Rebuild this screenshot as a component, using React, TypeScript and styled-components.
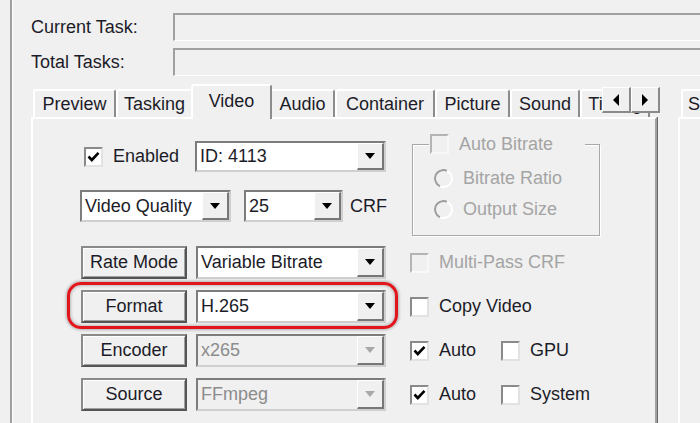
import React from 'react'
import styled, { createGlobalStyle } from 'styled-components'

const GlobalStyle = createGlobalStyle`
  html, body {
    margin: 0;
    padding: 0;
    background: #f0f0f0;
  }
  body {
    font-family: "Liberation Sans", Arial, sans-serif;
    font-size: 18px;
    color: #1c1c28;
  }
`

const Screen = styled.div`
  display: flex;
  width: 700px;
  height: 423px;
  overflow: hidden;
  background: #f0f0f0;
`

const Frame = styled.div`
  display: flex;
  flex-direction: column;
  flex: 1;
  min-width: 0;
  margin-left: 10px;
  padding: 13px 0 0 19px;
  border-left: 2px solid #a0a0a0;
  box-shadow: inset 1px 0 #ffffff;
`

const StatusGrid = styled.div`
  display: grid;
  grid-template-columns: 142px 560px;
  grid-auto-rows: 28px;
  row-gap: 7px;
`

const FieldLabel = styled.div`
  display: flex;
  align-items: center;
  white-space: nowrap;
`

const StatusBox = styled.div`
  box-sizing: border-box;
  border-top: 2px solid #a0a0a0;
  border-left: 2px solid #a0a0a0;
  border-bottom: 1px solid #ffffff;
  background: #f0f0f0;
`

const TabsRow = styled.div`
  display: flex;
  flex: 1;
  min-height: 0;
  margin-top: 8px;
`

const TabControl = styled.div`
  display: flex;
  flex-direction: column;
  width: 626px;
  flex-shrink: 0;
`

const TabStrip = styled.div`
  position: relative;
  display: flex;
  align-items: flex-end;
  height: 33px;
  padding-left: 2px;
`

const Tab = styled.div<{ $w: number; $active?: boolean }>`
  position: relative;
  box-sizing: border-box;
  display: flex;
  align-items: center;
  justify-content: center;
  flex-shrink: 0;
  width: ${(p) => (p.$active ? p.$w + 4 : p.$w)}px;
  height: ${(p) => (p.$active ? 35 : 28)}px;
  margin: ${(p) => (p.$active ? '0 -2px -2px' : '0')};
  padding-bottom: ${(p) => (p.$active ? 3 : 0)}px;
  z-index: ${(p) => (p.$active ? 2 : 1)};
  background: #f0f0f0;
  border-top: 2px solid #ffffff;
  border-left: 2px solid #ffffff;
  border-right: 2px solid #8c8c8c;
  border-radius: 3px 3px 0 0;
  white-space: nowrap;
  overflow: hidden;
`

const ScrollArrows = styled.div`
  position: absolute;
  right: -3px;
  top: 3px;
  display: flex;
  z-index: 3;
`

const ArrowBtn = styled.div`
  box-sizing: border-box;
  display: flex;
  align-items: center;
  justify-content: center;
  width: 29px;
  height: 26px;
  background: #f0f0f0;
  border-top: 1px solid #ffffff;
  border-left: 1px solid #ffffff;
  border-right: 2px solid #8a8a8a;
  border-bottom: 2px solid #8a8a8a;
`

const TriLeft = styled.span`
  width: 0;
  height: 0;
  border-top: 6px solid transparent;
  border-bottom: 6px solid transparent;
  border-right: 6px solid #000;
`

const TriRight = styled.span`
  width: 0;
  height: 0;
  border-top: 6px solid transparent;
  border-bottom: 6px solid transparent;
  border-left: 6px solid #000;
`

const TabPanel = styled.div`
  flex: 1;
  box-sizing: border-box;
  padding: 22px 0 0 47px;
  border-top: 2px solid #ffffff;
  border-left: 2px solid #ffffff;
  border-right: 2px solid #a0a0a0;
  box-shadow: 1px 0 #696969;
  display: flex;
  flex-direction: column;
`

const SidePane = styled.div`
  display: flex;
  flex-direction: column;
  flex: 1;
  margin-left: 21px;
`

const SideTab = styled.div`
  box-sizing: border-box;
  height: 28px;
  width: 60px;
  margin: 5px 0 0 3px;
  padding-left: 5px;
  display: flex;
  align-items: center;
  border-top: 2px solid #ffffff;
  border-left: 2px solid #ffffff;
  border-radius: 3px 3px 0 0;
`

const SidePanel = styled.div`
  flex: 1;
  border-top: 2px solid #ffffff;
  border-left: 2px solid #ffffff;
`

const TopBlock = styled.div`
  display: flex;
  align-items: flex-start;
`

const LeftStack = styled.div`
  display: flex;
  flex-direction: column;
  gap: 18px;
  width: 306px;
`

const StackRow = styled.div<{ $h: number; $spread?: boolean }>`
  display: flex;
  align-items: center;
  height: ${(p) => p.$h}px;
  justify-content: ${(p) => (p.$spread ? 'space-between' : 'flex-start')};
`

const ComboBox = styled.div<{ $w: number; $disabled?: boolean; $ml?: number }>`
  box-sizing: border-box;
  display: flex;
  width: ${(p) => p.$w}px;
  height: 100%;
  margin-left: ${(p) => p.$ml ?? 0}px;
  flex-shrink: 0;
  border: 2px solid;
  border-color: #7c7c7c #cfcfcf #cfcfcf #7c7c7c;
  background: ${(p) => (p.$disabled ? '#f0f0f0' : '#ffffff')};
  color: ${(p) => (p.$disabled ? '#8c8c8c' : 'inherit')};
`

const ComboText = styled.div`
  flex: 1;
  display: flex;
  align-items: center;
  padding-left: 3px;
  white-space: nowrap;
  overflow: hidden;
`

const ComboArrow = styled.div`
  box-sizing: border-box;
  display: flex;
  align-items: center;
  justify-content: center;
  width: 27px;
  background: #f0f0f0;
  border-top: 1px solid #ffffff;
  border-left: 1px solid #ffffff;
  border-right: 2px solid #777777;
  border-bottom: 2px solid #777777;
`

const DownTri = styled.span<{ $disabled?: boolean }>`
  width: 0;
  height: 0;
  border-left: 5px solid transparent;
  border-right: 5px solid transparent;
  border-top: 6px solid ${(p) => (p.$disabled ? '#a8a8a8' : '#000000')};
`

const Suffix = styled.span`
  margin-left: 7px;
`

const GroupBox = styled.div`
  position: relative;
  box-sizing: border-box;
  width: 188px;
  height: 92px;
  margin: 3px 0 0 26px;
  padding: 22px 0 0 21px;
  border: 1px solid #a8a8a8;
  box-shadow: inset 1px 1px #ffffff, 1px 1px #ffffff;
  display: flex;
  flex-direction: column;
  gap: 9px;
`

const Legend = styled.div`
  position: absolute;
  top: -12px;
  left: 16px;
  width: 155px;
  height: 22px;
  padding-left: 1px;
  background: #f0f0f0;
  display: flex;
  align-items: center;
`

const CheckItem = styled.label<{ $disabled?: boolean; $w?: number; $ml?: number }>`
  display: inline-flex;
  align-items: center;
  gap: 10px;
  height: 22px;
  flex-shrink: 0;
  width: ${(p) => (p.$w ? `${p.$w}px` : 'auto')};
  margin-left: ${(p) => p.$ml ?? 0}px;
  color: ${(p) => (p.$disabled ? '#a4a4a4' : 'inherit')};
  white-space: nowrap;
`

const Box = styled.span<{ $disabled?: boolean }>`
  box-sizing: border-box;
  display: inline-flex;
  align-items: center;
  justify-content: center;
  width: 19px;
  height: 20px;
  border: 2px solid;
  border-color: ${(p) =>
    p.$disabled ? '#b4b4b4 #f8f8f8 #f8f8f8 #b4b4b4' : '#8a8a8a #e2e2e2 #e2e2e2 #8a8a8a'};
  background: ${(p) => (p.$disabled ? '#f0f0f0' : '#ffffff')};
`

const RadioDot = styled.span`
  box-sizing: border-box;
  width: 19px;
  height: 19px;
  border-radius: 50%;
  border: 2px solid;
  border-color: #9c9c9c #ffffff #ffffff #9c9c9c;
  transform: rotate(-20deg);
  background: #f0f0f0;
`

const FormRows = styled.div`
  display: flex;
  flex-direction: column;
  gap: 11px;
  margin-top: 10px;
`

const FormRow = styled.div`
  position: relative;
  display: flex;
  align-items: center;
  height: 33px;
`

const PushButton = styled.button`
  box-sizing: border-box;
  width: 106px;
  height: 100%;
  margin-left: 1px;
  padding: 0;
  flex-shrink: 0;
  font: inherit;
  color: inherit;
  background: #f0f0f0;
  border: 2px solid;
  border-color: #8a8a8a #555555 #555555 #8a8a8a;
  box-shadow: inset 1px 1px #ffffff, inset -1px -1px #a0a0a0;
`

const RightCell = styled.div`
  display: flex;
  align-items: center;
  margin-left: 24px;
`

const Highlight = styled.div`
  position: absolute;
  left: -13px;
  top: -8px;
  width: 331px;
  height: 47px;
  box-sizing: border-box;
  border: 3px solid #e2141c;
  border-radius: 14px;
  box-shadow: 0 0 3px 1px rgba(0, 0, 0, 0.28), inset 0 0 3px 1px rgba(0, 0, 0, 0.22);
  pointer-events: none;
`

const TABS = [
  { label: 'Preview', w: 83 },
  { label: 'Tasking', w: 77 },
  { label: 'Video', w: 77, active: true },
  { label: 'Audio', w: 65 },
  { label: 'Container', w: 100 },
  { label: 'Picture', w: 75 },
  { label: 'Sound', w: 70 },
  { label: 'Timing', w: 70 },
]

function Check({ checked, disabled }: { checked?: boolean; disabled?: boolean }) {
  return (
    <Box $disabled={disabled}>
      {checked ? (
        <svg width="13" height="12" viewBox="0 0 13 12">
          <path d="M1.5 5.5 L4.8 9 L11.5 1.8" fill="none" stroke="#000" strokeWidth="2.6" />
        </svg>
      ) : null}
    </Box>
  )
}

function Combo({
  value,
  w,
  ml,
  disabled,
}: {
  value: string
  w: number
  ml?: number
  disabled?: boolean
}) {
  return (
    <ComboBox $w={w} $ml={ml} $disabled={disabled}>
      <ComboText>{value}</ComboText>
      <ComboArrow>
        <DownTri $disabled={disabled} />
      </ComboArrow>
    </ComboBox>
  )
}

export default function App() {
  return (
    <Screen>
      <GlobalStyle />
      <Frame>
        <StatusGrid>
          <FieldLabel>Current Task:</FieldLabel>
          <StatusBox />
          <FieldLabel>Total Tasks:</FieldLabel>
          <StatusBox />
        </StatusGrid>

        <TabsRow>
          <TabControl>
            <TabStrip>
              {TABS.map((t) => (
                <Tab key={t.label} $w={t.w} $active={t.active}>
                  {t.label}
                </Tab>
              ))}
              <ScrollArrows>
                <ArrowBtn>
                  <TriLeft />
                </ArrowBtn>
                <ArrowBtn>
                  <TriRight />
                </ArrowBtn>
              </ScrollArrows>
            </TabStrip>

            <TabPanel>
              <TopBlock>
                <LeftStack>
                  <StackRow $h={31} $spread>
                    <CheckItem $ml={4}>
                      <Check checked />
                      Enabled
                    </CheckItem>
                    <Combo value="ID: 4113" w={191} />
                  </StackRow>
                  <StackRow $h={32}>
                    <Combo value="Video Quality" w={151} />
                    <Combo value="25" w={99} ml={13} />
                    <Suffix>CRF</Suffix>
                  </StackRow>
                </LeftStack>
                <GroupBox>
                  <Legend>
                    <CheckItem $disabled>
                      <Check disabled />
                      Auto Bitrate
                    </CheckItem>
                  </Legend>
                  <CheckItem $disabled>
                    <RadioDot />
                    Bitrate Ratio
                  </CheckItem>
                  <CheckItem $disabled>
                    <RadioDot />
                    Output Size
                  </CheckItem>
                </GroupBox>
              </TopBlock>

              <FormRows>
                <FormRow>
                  <PushButton>Rate Mode</PushButton>
                  <Combo value="Variable Bitrate" w={190} ml={9} />
                  <RightCell>
                    <CheckItem $disabled>
                      <Check disabled />
                      Multi-Pass CRF
                    </CheckItem>
                  </RightCell>
                </FormRow>
                <FormRow>
                  <PushButton>Format</PushButton>
                  <Combo value="H.265" w={190} ml={9} />
                  <RightCell>
                    <CheckItem>
                      <Check />
                      Copy Video
                    </CheckItem>
                  </RightCell>
                  <Highlight />
                </FormRow>
                <FormRow>
                  <PushButton>Encoder</PushButton>
                  <Combo value="x265" w={190} ml={9} disabled />
                  <RightCell>
                    <CheckItem $w={91}>
                      <Check checked />
                      Auto
                    </CheckItem>
                    <CheckItem>
                      <Check />
                      GPU
                    </CheckItem>
                  </RightCell>
                </FormRow>
                <FormRow>
                  <PushButton>Source</PushButton>
                  <Combo value="FFmpeg" w={190} ml={9} disabled />
                  <RightCell>
                    <CheckItem $w={91}>
                      <Check checked />
                      Auto
                    </CheckItem>
                    <CheckItem>
                      <Check />
                      System
                    </CheckItem>
                  </RightCell>
                </FormRow>
              </FormRows>
            </TabPanel>
          </TabControl>

          <SidePane>
            <SideTab>S</SideTab>
            <SidePanel />
          </SidePane>
        </TabsRow>
      </Frame>
    </Screen>
  )
}
